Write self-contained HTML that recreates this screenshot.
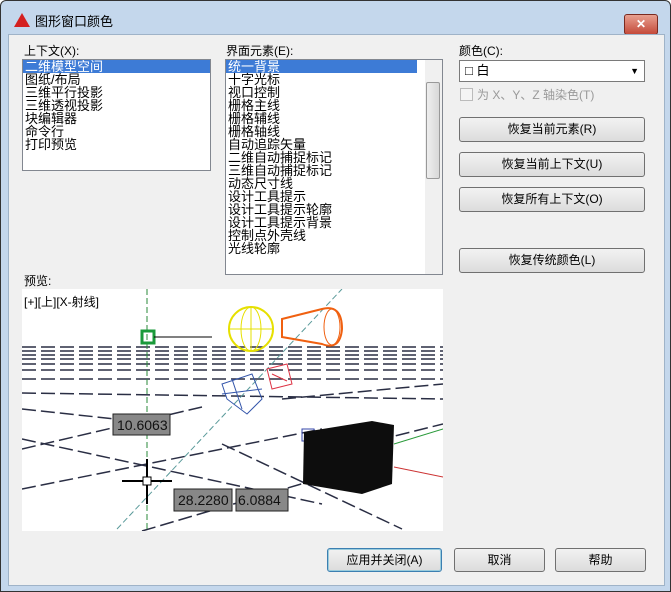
<!DOCTYPE html><html><head><meta charset="utf-8"><style>
body{margin:0;width:671px;height:592px;overflow:hidden;background:#fff;font-family:"Liberation Sans","Noto Sans CJK SC",sans-serif;font-size:12px;}
.win{position:absolute;left:0;top:0;width:669px;height:590px;border:1px solid #333;background:#c4d7ec;border-radius:6px 6px 0 0;}
.cl{position:absolute;left:8px;top:34px;width:655px;height:550px;background:#f0f0f0;border:1px solid #9fb3c8;}
.t{position:absolute;white-space:nowrap;color:#000;}
.lb{position:absolute;background:#fff;border:1px solid #828790;overflow:hidden;line-height:13px;font-size:13px;}
.lb div{padding-left:2px;height:13px;}
.sel{background:#3d7bd6;color:#fff;}
.btn{position:absolute;border:1px solid #707070;border-radius:3px;background:linear-gradient(#f2f2f2,#dcdcdc);text-align:center;font-size:12px;box-sizing:border-box;}
</style></head><body>
<div class="win">
<div style="position:absolute;left:13px;top:12px;width:0;height:0;border-left:8px solid transparent;border-right:8px solid transparent;border-bottom:14px solid #d42020"></div>
<div class="t" style="left:34px;top:10px;font-size:13px">图形窗口颜色</div>
<div style="position:absolute;left:623px;top:13px;width:32px;height:19px;background:linear-gradient(#e8a090,#c44a3a);border:1px solid #7a2a20;border-radius:3px;color:#fff;font-weight:bold;text-align:center;line-height:18px">✕</div>
</div>
<div class="cl"></div>
<div class="t" style="left:24px;top:42px">上下文(X):</div>
<div class="lb" style="left:22px;top:59px;width:187px;height:110px">
<div class="sel">二维模型空间</div><div>图纸/布局</div><div>三维平行投影</div><div>三维透视投影</div><div>块编辑器</div><div>命令行</div><div>打印预览</div></div>
<div class="t" style="left:226px;top:42px">界面元素(E):</div>
<div class="lb" style="left:225px;top:59px;width:216px;height:214px">
<div class="sel" style="width:189px">统一背景</div><div>十字光标</div><div>视口控制</div><div>栅格主线</div><div>栅格辅线</div><div>栅格轴线</div><div>自动追踪矢量</div><div>二维自动捕捉标记</div><div>三维自动捕捉标记</div><div>动态尺寸线</div><div>设计工具提示</div><div>设计工具提示轮廓</div><div>设计工具提示背景</div><div>控制点外壳线</div><div>光线轮廓</div>
<div style="position:absolute;right:0;top:0;width:17px;height:214px;background:#f0f0f0;padding:0"></div>
<div style="position:absolute;right:2px;top:22px;width:12px;height:95px;background:linear-gradient(90deg,#eee,#d8d8d8);border:1px solid #999;border-radius:2px;padding:0"></div>
</div>
<div class="t" style="left:459px;top:42px">颜色(C):</div>
<div style="position:absolute;left:459px;top:60px;width:186px;height:22px;background:#fff;border:1px solid #7a7a7a;box-sizing:border-box;font-size:13px;line-height:20px;padding-left:5px">□ 白<span style="position:absolute;right:5px;font-size:9px">▼</span></div>
<div style="position:absolute;left:460px;top:88px;width:11px;height:11px;border:1px solid #bbb;background:#f4f4f4"></div>
<div class="t" style="left:477px;top:86px;color:#999">为 X、Y、Z 轴染色(T)</div>
<div class="btn" style="left:459px;top:117px;width:186px;height:25px;line-height:23px">恢复当前元素(R)</div>
<div class="btn" style="left:459px;top:152px;width:186px;height:25px;line-height:23px">恢复当前上下文(U)</div>
<div class="btn" style="left:459px;top:187px;width:186px;height:25px;line-height:23px">恢复所有上下文(O)</div>
<div class="btn" style="left:459px;top:248px;width:186px;height:25px;line-height:23px">恢复传统颜色(L)</div>
<div class="t" style="left:24px;top:272px">预览:</div>
<svg style="position:absolute;left:22px;top:289px" width="421" height="242" viewBox="0 0 421 242">
<rect width="421" height="242" fill="#fff"/>
<g stroke="#2a2e44" stroke-width="1.5" stroke-dasharray="14 5">
<line x1="0" y1="58" x2="421" y2="58"/><line x1="0" y1="62" x2="421" y2="62"/><line x1="0" y1="66" x2="421" y2="66"/>
<line x1="0" y1="70" x2="421" y2="70"/><line x1="0" y1="75" x2="421" y2="75"/><line x1="0" y1="81" x2="421" y2="81"/>
<line x1="0" y1="90" x2="421" y2="90"/><line x1="0" y1="104" x2="421" y2="110"/>
<line x1="0" y1="120" x2="140" y2="135"/><line x1="260" y1="110" x2="421" y2="95"/>
<line x1="0" y1="160" x2="180" y2="118"/><line x1="0" y1="200" x2="300" y2="140"/>
<line x1="0" y1="150" x2="300" y2="215"/><line x1="200" y1="155" x2="380" y2="240"/>
<line x1="120" y1="242" x2="330" y2="180"/><line x1="300" y1="165" x2="421" y2="135"/>
</g>
<line x1="125" y1="0" x2="125" y2="242" stroke="#2a8a3a" stroke-dasharray="6 3"/>
<line x1="95" y1="240" x2="320" y2="0" stroke="#5a9a9a" stroke-dasharray="6 3"/>
<rect x="120" y="42" width="12" height="12" fill="none" stroke="#1a9a3a" stroke-width="3"/>
<line x1="132" y1="48" x2="190" y2="48" stroke="#000"/>
<circle cx="229" cy="40" r="22" fill="none" stroke="#e6e000" stroke-width="2"/>
<ellipse cx="229" cy="40" rx="10" ry="22" fill="none" stroke="#e6e000"/>
<line x1="207" y1="40" x2="251" y2="40" stroke="#e6e000"/><line x1="229" y1="18" x2="229" y2="62" stroke="#e6e000"/>
<path d="M260 30 L300 20 Q320 15 320 40 Q318 62 300 55 L260 48 Z" fill="none" stroke="#f06010" stroke-width="2"/>
<ellipse cx="310" cy="38" rx="8" ry="18" fill="none" stroke="#f06010"/>
<g stroke="#3355aa" fill="none"><path d="M200 95 L230 85 L240 110 L225 125 L205 110 Z M210 90 L220 120 M200 105 L240 100"/></g>
<g stroke="#dd3344" fill="none"><path d="M245 80 L265 75 L270 95 L250 100 Z M250 85 L265 92"/></g>
<rect x="280" y="140" width="12" height="12" fill="none" stroke="#3344aa"/>
<path d="M282 143 L350 132 L372 136 L370 195 L340 205 L281 195 Z" fill="#0d0d0d"/>
<line x1="372" y1="178" x2="421" y2="188" stroke="#cc3333"/>
<line x1="372" y1="155" x2="421" y2="140" stroke="#2a9a3a"/>
<rect x="91" y="125" width="57" height="21" fill="#888" stroke="#222"/>
<text x="95" y="141" font-size="14" fill="#111" font-family="Liberation Sans">10.6063</text>
<line x1="100" y1="192" x2="150" y2="192" stroke="#000" stroke-width="2"/>
<line x1="125" y1="170" x2="125" y2="215" stroke="#000" stroke-width="2"/>
<rect x="121" y="188" width="8" height="8" fill="#fff" stroke="#000"/>
<rect x="152" y="200" width="58" height="22" fill="#888" stroke="#222"/>
<text x="156" y="216" font-size="14" fill="#111" font-family="Liberation Sans">28.2280</text>
<rect x="214" y="200" width="52" height="22" fill="#888" stroke="#222"/>
<text x="216" y="216" font-size="14" fill="#111" font-family="Liberation Sans">6.0884</text>
<text x="2" y="17" font-size="12" fill="#000" font-family="Liberation Sans,Noto Sans CJK SC">[+][上][X-射线]</text>
</svg>
<div class="btn" style="left:327px;top:548px;width:115px;height:24px;line-height:22px;border-color:#3c7fb1;box-shadow:inset 0 0 0 1px #9cd">应用并关闭(A)</div>
<div class="btn" style="left:454px;top:548px;width:91px;height:24px;line-height:22px">取消</div>
<div class="btn" style="left:555px;top:548px;width:91px;height:24px;line-height:22px">帮助</div>
</body></html>
